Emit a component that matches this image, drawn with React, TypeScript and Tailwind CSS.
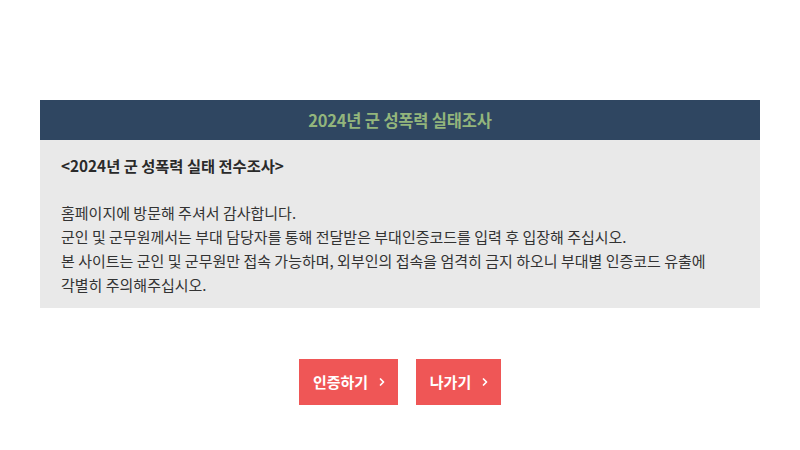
import { ChevronRight } from "lucide-react";

const font = { fontFamily: '"Noto Sans CJK KR", "Noto Sans", sans-serif' };

function RedButton({ label, width }: { label: string; width: string }) {
	return (
		<button
			className={`flex h-[46px] items-center justify-center gap-[8px] bg-[#ef5656] pl-[4px] text-[15px] font-bold text-white ${width}`}
			type="button"
		>
			<span>{label}</span>
			<ChevronRight size={12} strokeWidth={3.5} />
		</button>
	);
}

export default function App() {
	return (
		<div className="min-h-[450px] w-full bg-white pt-[100px]" style={font}>
			<div className="mx-[40px]">
				<div className="flex h-[40px] items-center justify-center bg-[#2f4661]">
					<h1 className="text-[16.5px] font-bold tracking-[-0.2px] text-[#93b57c]">2024년 군 성폭력 실태조사</h1>
				</div>
				<div className="bg-[#e9e9e9] px-[21px] pb-[11px] pt-[13px] text-[15px] leading-[24px] text-[#333333]">
					<p className="text-[15.3px] font-bold text-[#2a2a2a]">&lt;2024년 군 성폭력 실태 전수조사&gt;</p>
					<p className="h-[24px]" />
					<p>홈페이지에 방문해 주셔서 감사합니다.</p>
					<p>군인 및 군무원께서는 부대 담당자를 통해 전달받은 부대인증코드를 입력 후 입장해 주십시오.</p>
					<p>
						본 사이트는 군인 및 군무원만 접속 가능하며, 외부인의 접속을 엄격히 금지 하오니 부대별 인증코드 유출에
						<br />
						각별히 주의해주십시오.
					</p>
				</div>
			</div>
			<div className="mt-[51px] flex justify-center gap-[18px]">
				<RedButton label="인증하기" width="w-[99px]" />
				<RedButton label="나가기" width="w-[85px]" />
			</div>
		</div>
	);
}
